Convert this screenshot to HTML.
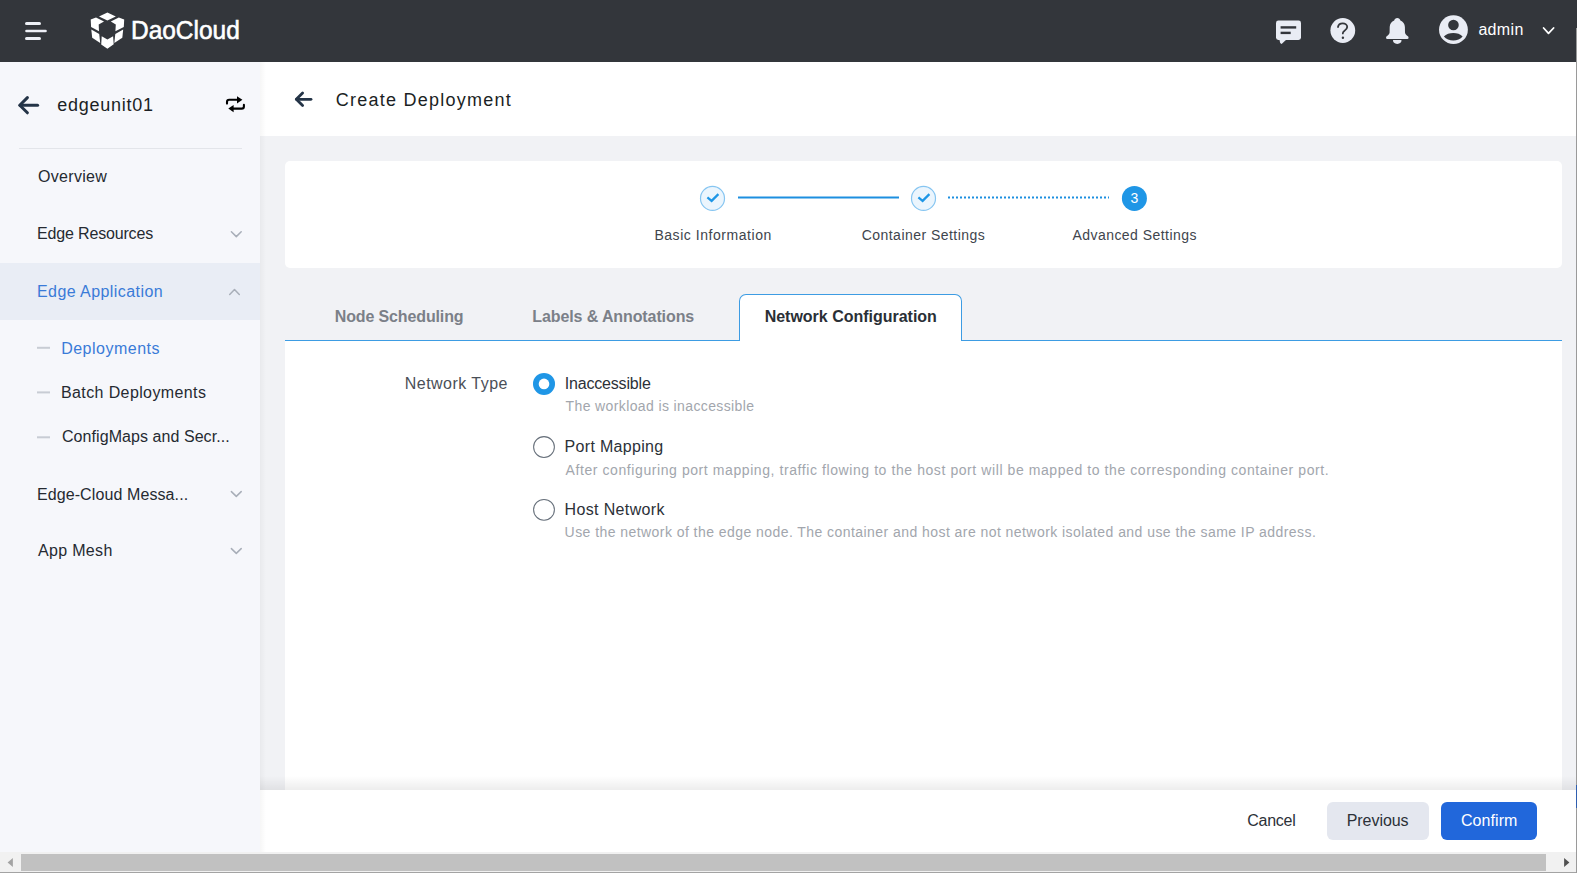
<!DOCTYPE html>
<html><head><meta charset="utf-8">
<style>
*{box-sizing:border-box;margin:0;padding:0}
html,body{width:1577px;height:873px;overflow:hidden;font-family:"Liberation Sans",sans-serif;background:#f1f2f5;position:relative}
.r{position:absolute}
.t{position:absolute;white-space:nowrap;z-index:5}
svg{position:absolute;left:0;top:0;z-index:3}
</style></head><body>
<!-- header -->
<div class="r" style="left:0;top:0;width:1577px;height:62px;background:#33363b"></div>
<!-- sidebar -->
<div class="r" style="left:0;top:62px;width:260px;height:791px;background:#f6f7fb"></div>
<div class="r" style="left:0;top:263px;width:260px;height:57px;background:#e9edf5"></div>
<div class="r" style="left:19px;top:148px;width:223px;height:1px;background:#e3e5ea"></div>
<!-- main -->
<div class="r" style="left:260px;top:62px;width:1316px;height:74px;background:#fff"></div>
<div class="r" style="left:285px;top:161px;width:1277px;height:107px;background:#fff;border-radius:5px"></div>
<div class="r" style="left:285px;top:341px;width:1277px;height:449px;background:#fff"></div>
<div class="r" style="left:285px;top:340px;width:1277px;height:1px;background:#3d9ce3"></div>
<div class="r" style="left:739px;top:294px;width:223px;height:47px;background:#fff;border:1px solid #3d9ce3;border-bottom:none;border-radius:7px 7px 0 0"></div>
<!-- footer -->
<div class="r" style="left:260px;top:776px;width:1316px;height:14px;background:linear-gradient(180deg,rgba(0,0,0,0),rgba(0,0,0,0.07))"></div>
<div class="r" style="left:260px;top:790px;width:1316px;height:63px;background:#fff"></div>
<div class="r" style="left:1327px;top:802px;width:102px;height:38px;background:#e4e7ef;border-radius:6px"></div>
<div class="r" style="left:1441px;top:802px;width:96px;height:38px;background:#2167db;border-radius:6px"></div>
<div class="r"  style="left:260px;top:62px;width:6px;height:790px;background:linear-gradient(90deg,rgba(0,0,0,0.035),rgba(0,0,0,0))"></div>
<!-- scrollbar -->
<div class="r" style="left:0;top:852px;width:1577px;height:21px;background:#f1f1f1"></div>
<div class="r" style="left:21px;top:854px;width:1525px;height:17px;background:#c1c1c1"></div>
<div class="r" style="left:0;top:872px;width:1577px;height:1px;background:#a3a3a3"></div>
<div class="r" style="left:1576px;top:28px;width:1px;height:845px;background:#9a9a9a"></div>
<div class="r" style="left:1576px;top:785px;width:1px;height:23px;background:#2f5fb0"></div>

<svg width="1577" height="873" viewBox="0 0 1577 873">
 <!-- hamburger -->
 <g stroke="#eef0f6" stroke-width="3" stroke-linecap="round">
  <line x1="26.5" y1="23.4" x2="39.5" y2="23.4"/>
  <line x1="26.5" y1="31" x2="45.5" y2="31" stroke-width="2.6"/>
  <line x1="26.5" y1="38.5" x2="39.5" y2="38.5"/>
 </g>
 <!-- logo -->
 <g fill="#ffffff">
  <polygon points="99.0,16.4 107.4,12.6 115.8,16.4 107.4,20.6"/>
  <polygon points="90.7,19.5 96.0,17.6 104.0,21.4 98.7,24.4 99.0,31.3 91.1,27.1"/>
  <polygon points="124.2,19.5 118.8,17.6 110.8,21.4 115.8,24.4 115.4,31.3 123.8,27.1"/>
  <polygon points="91.3,29.4 99.2,34.1 100.2,43.1 92.2,37.7"/>
  <polygon points="123.2,29.4 115.3,34.1 114.3,43.1 122.3,37.7"/>
  <polygon points="101.7,36.2 107.4,39.6 113.1,36.2 113.7,44.2 107.4,48.8 101.2,44.6"/>
 </g>
 <!-- message icon -->
 <rect x="1276" y="20.5" width="25" height="19.4" rx="2.4" fill="#e9ecf4"/>
 <polygon points="1279.3,39 1280.2,43 1281.6,43.9 1287,39" fill="#e9ecf4"/>
 <g stroke="#33363b" stroke-width="2.4" stroke-linecap="butt">
  <line x1="1280.6" y1="27.4" x2="1296.2" y2="27.4"/>
  <line x1="1280.6" y1="32.9" x2="1290.7" y2="32.9"/>
 </g>
 <!-- help -->
 <circle cx="1342.8" cy="30.5" r="12.4" fill="#e9ecf4"/>
 <path d="M1338,27 c0.4,-2.3 2.3,-3.6 4.7,-3.6 c2.5,0 4.5,1.5 4.5,3.7 c0,2 -1.5,3 -2.9,3.9 c-1.1,0.7 -1.5,1.4 -1.5,2.4" fill="none" stroke="#33363b" stroke-width="1.8" stroke-linecap="round"/>
 <circle cx="1342.9" cy="37.8" r="1.2" fill="#33363b"/>
 <!-- bell -->
 <path d="M1397.3,17.9 C1395.7,17.9 1394.5,19 1394.2,20.4 C1391.6,21.3 1389.8,23.8 1389.7,27 L1389.6,32.5 C1389.5,34 1388.4,35.2 1386.4,36.6 Q1385.3,38.9 1387.3,38.9 H1407.3 Q1409.3,38.9 1408.2,36.6 C1406.2,35.2 1405.1,34 1405,32.5 L1404.9,27 C1404.8,23.8 1403,21.3 1400.4,20.4 C1400.1,19 1398.9,17.9 1397.3,17.9 Z" fill="#e9ecf4"/>
 <path d="M1393,40.1 H1401.5 A4.25,3.8 0 0 1 1393,40.1 Z" fill="#e9ecf4"/>
 <!-- avatar -->
 <circle cx="1453.45" cy="29.65" r="14.4" fill="#e9ecf4"/>
 <circle cx="1453.45" cy="24.95" r="5.3" fill="#33363b"/>
 <path d="M1443.9,36.5 C1446,34 1449.8,33 1453.3,33 C1456.8,33 1460.6,34 1462.6,36.5 C1460.6,39 1456.8,40.5 1453.3,40.5 C1449.8,40.5 1446,39 1443.9,36.5 Z" fill="#33363b"/>
 <polyline points="1543.6,28 1548.5,33.3 1553.6,28" fill="none" stroke="#ffffff" stroke-width="1.8" stroke-linecap="round" stroke-linejoin="round"/>
 <!-- sidebar icons -->
 <g fill="none" stroke="#243447" stroke-width="3" stroke-linecap="round" stroke-linejoin="round">
  <path d="M37.6,105.2 H20"/>
  <path d="M27.4,97.6 L19.8,105.2 L27.4,112.8"/>
 </g>
 <g fill="none" stroke="#000" stroke-width="2.1" stroke-linecap="round">
  <path d="M227,103.6 V102 q0,-2.2 2.2,-2.2 H238"/>
  <path d="M243.9,104.9 V106.4 q0,2.2 -2.2,2.2 H233"/>
 </g>
 <polygon points="237,96.2 242.4,99.8 237,103.4" fill="#000"/>
 <polygon points="233.6,105 228.3,108.6 233.6,112.2" fill="#000"/>
 <g fill="none" stroke="#a8aeb8" stroke-width="1.5" stroke-linecap="round" stroke-linejoin="round">
  <polyline points="231.4,231.8 236.3,236.6 241.2,231.8"/>
  <polyline points="229.7,294.4 234.5,289.5 239.3,294.4"/>
  <polyline points="231.4,491.6 236.3,496.4 241.2,491.6"/>
  <polyline points="231.4,548.6 236.3,553.4 241.2,548.6"/>
 </g>
 <g stroke="#c8ccd4" stroke-width="2">
  <line x1="37" y1="347.8" x2="50" y2="347.8"/>
  <line x1="37" y1="392.4" x2="50" y2="392.4"/>
  <line x1="37" y1="437.3" x2="50" y2="437.3"/>
 </g>
 <!-- title arrow -->
 <g fill="none" stroke="#243447" stroke-width="2.8" stroke-linecap="round" stroke-linejoin="round">
  <path d="M311,99.3 H296.5"/>
  <path d="M302.6,93 L296.3,99.3 L302.6,105.6"/>
 </g>
 <!-- stepper -->
 <circle cx="712.5" cy="198.4" r="12" fill="#ebf5fd" stroke="#86c5f1" stroke-width="1.2"/>
 <polyline points="707.4,197.4 711.6,200.9 718.4,194.1" fill="none" stroke="#1e96e6" stroke-width="2.2" stroke-linejoin="miter"/>
 <line x1="738" y1="197.6" x2="899" y2="197.6" stroke="#1d8fe0" stroke-width="2"/>
 <circle cx="923.5" cy="198.4" r="12" fill="#ebf5fd" stroke="#86c5f1" stroke-width="1.2"/>
 <polyline points="918.4,197.4 922.6,200.9 929.4,194.1" fill="none" stroke="#1e96e6" stroke-width="2.2" stroke-linejoin="miter"/>
 <line x1="948" y1="197.6" x2="1109" y2="197.6" stroke="#1d8fe0" stroke-width="2" stroke-dasharray="2 2"/>
 <circle cx="1134.4" cy="198.4" r="12.5" fill="#1f96e6"/>
 <!-- radios -->
 <circle cx="544" cy="383.9" r="11" fill="#1f96e6"/>
 <circle cx="544" cy="383.9" r="5.3" fill="#fff"/>
 <circle cx="544" cy="447" r="10.4" fill="#fff" stroke="#67707b" stroke-width="1.05"/>
 <circle cx="544" cy="509.8" r="10.4" fill="#fff" stroke="#67707b" stroke-width="1.05"/>
 <!-- scroll arrows -->
 <polygon points="7.6,862.5 12.9,857.9 12.9,867.1" fill="#a3a3a3"/>
 <polygon points="1569.4,862.5 1564.1,857.9 1564.1,867.1" fill="#505050"/>
</svg>
<div class="t" style="left:131.45px;top:13.00px;font-size:26.5px;line-height:34px;font-weight:normal;color:#ffffff;transform:scaleX(0.9226);transform-origin:0 0;-webkit-text-stroke:0.6px #fff">DaoCloud</div>
<div class="t" style="left:1478.40px;top:19.00px;font-size:16px;line-height:21px;font-weight:normal;color:#ffffff;letter-spacing:0.330px">admin</div>
<div class="t" style="left:57.20px;top:93.00px;font-size:18px;line-height:24px;font-weight:normal;color:#1b1f24;letter-spacing:0.758px">edgeunit01</div>
<div class="t" style="left:38.00px;top:166.00px;font-size:16px;line-height:21px;font-weight:normal;color:#252a31;letter-spacing:0.311px">Overview</div>
<div class="t" style="left:37.00px;top:223.00px;font-size:16px;line-height:21px;font-weight:normal;color:#252a31;letter-spacing:-0.161px">Edge Resources</div>
<div class="t" style="left:37.00px;top:281.00px;font-size:16px;line-height:21px;font-weight:normal;color:#3a7bd8;letter-spacing:0.427px">Edge Application</div>
<div class="t" style="left:61.20px;top:338.00px;font-size:16px;line-height:21px;font-weight:normal;color:#3a7bd8;letter-spacing:0.492px">Deployments</div>
<div class="t" style="left:61.00px;top:382.00px;font-size:16px;line-height:21px;font-weight:normal;color:#252a31;letter-spacing:0.385px">Batch Deployments</div>
<div class="t" style="left:62.00px;top:426.00px;font-size:16px;line-height:21px;font-weight:normal;color:#252a31;letter-spacing:0.063px">ConfigMaps and Secr...</div>
<div class="t" style="left:36.90px;top:484.00px;font-size:16px;line-height:21px;font-weight:normal;color:#252a31;letter-spacing:0.102px">Edge-Cloud Messa...</div>
<div class="t" style="left:38.00px;top:540.00px;font-size:16px;line-height:21px;font-weight:normal;color:#252a31;letter-spacing:0.323px">App Mesh</div>
<div class="t" style="left:335.70px;top:88.00px;font-size:18px;line-height:24px;font-weight:normal;color:#1b1f24;letter-spacing:1.252px">Create Deployment</div>
<div class="t" style="left:654.40px;top:225.00px;font-size:14px;line-height:20px;font-weight:normal;color:#40454d;letter-spacing:0.545px">Basic Information</div>
<div class="t" style="left:861.70px;top:225.00px;font-size:14px;line-height:20px;font-weight:normal;color:#40454d;letter-spacing:0.466px">Container Settings</div>
<div class="t" style="left:1072.40px;top:225.00px;font-size:14px;line-height:20px;font-weight:normal;color:#40454d;letter-spacing:0.460px">Advanced Settings</div>
<div class="t" style="left:334.80px;top:306.00px;font-size:16px;line-height:21px;font-weight:bold;color:#7b8088;letter-spacing:-0.136px">Node Scheduling</div>
<div class="t" style="left:532.30px;top:306.00px;font-size:16px;line-height:21px;font-weight:bold;color:#7b8088;letter-spacing:-0.103px">Labels &amp; Annotations</div>
<div class="t" style="left:764.70px;top:306.00px;font-size:16px;line-height:21px;font-weight:bold;color:#2a2f36;letter-spacing:-0.013px">Network Configuration</div>
<div class="t" style="left:404.80px;top:373.00px;font-size:16px;line-height:21px;font-weight:normal;color:#4a4f57;letter-spacing:0.462px">Network Type</div>
<div class="t" style="left:564.70px;top:373.00px;font-size:16px;line-height:21px;font-weight:normal;color:#2c3138;letter-spacing:-0.177px">Inaccessible</div>
<div class="t" style="left:565.60px;top:396.00px;font-size:14px;line-height:20px;font-weight:normal;color:#a2a6ad;letter-spacing:0.378px">The workload is inaccessible</div>
<div class="t" style="left:564.60px;top:436.00px;font-size:16px;line-height:21px;font-weight:normal;color:#2c3138;letter-spacing:0.312px">Port Mapping</div>
<div class="t" style="left:565.60px;top:460.00px;font-size:14px;line-height:20px;font-weight:normal;color:#a2a6ad;letter-spacing:0.581px">After configuring port mapping, traffic flowing to the host port will be mapped to the corresponding container port.</div>
<div class="t" style="left:564.60px;top:499.00px;font-size:16px;line-height:21px;font-weight:normal;color:#2c3138;letter-spacing:0.352px">Host Network</div>
<div class="t" style="left:564.60px;top:522.00px;font-size:14px;line-height:20px;font-weight:normal;color:#a2a6ad;letter-spacing:0.442px">Use the network of the edge node. The container and host are not network isolated and use the same IP address.</div>
<div class="t" style="left:1247.20px;top:810.00px;font-size:16px;line-height:21px;font-weight:normal;color:#2c3138;letter-spacing:-0.230px">Cancel</div>
<div class="t" style="left:1346.70px;top:810.00px;font-size:16px;line-height:21px;font-weight:normal;color:#2c3138;letter-spacing:-0.050px">Previous</div>
<div class="t" style="left:1460.90px;top:810.00px;font-size:16px;line-height:21px;font-weight:normal;color:#ffffff;letter-spacing:0.087px">Confirm</div>
<div class="t" style="left:1130.40px;top:188.00px;font-size:14px;line-height:20px;font-weight:normal;color:#ffffff;letter-spacing:0.000px">3</div>
</body></html>
